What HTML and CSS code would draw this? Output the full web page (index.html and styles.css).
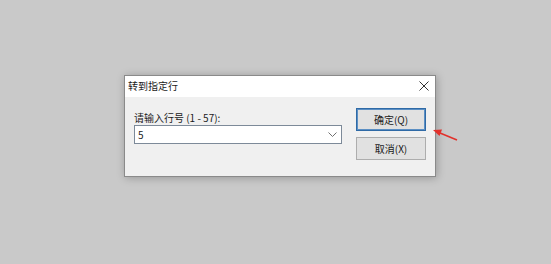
FILE: index.html
```html
<!DOCTYPE html>
<html lang="zh-CN">
<head>
<meta charset="utf-8">
<title>转到指定行</title>
<link rel="stylesheet" href="styles.css">
</head>
<body>
<div class="stage">
  <div class="dialog">
    <div class="titlebar">
      <span class="title">转到指定行</span>
      <svg class="close" width="10" height="10" viewBox="0 0 10 10"><path d="M0.5 0.5 L9.5 9.5 M9.5 0.5 L0.5 9.5" stroke="#333" stroke-width="1" fill="none"/></svg>
    </div>
    <div class="content">
      <div class="left">
        <div class="label">请输入行号 (1 - 57):</div>
        <div class="combo">
          <span class="value">5</span>
          <svg class="chev" width="9" height="5" viewBox="0 0 9 5"><path d="M0.5 0.5 L4.5 4.5 L8.5 0.5" stroke="#707070" stroke-width="1" fill="none"/></svg>
        </div>
      </div>
      <div class="buttons">
        <div class="btn primary">确定(Q)</div>
        <div class="btn">取消(X)</div>
      </div>
    </div>
  </div>
  <svg class="arrow" width="30" height="16" viewBox="0 0 30 16"><path d="M26 13 L9 6" stroke="#e2312b" stroke-width="1.6" fill="none"/><path d="M2 3 L11 2.5 L8.5 9 Z" fill="#e2312b"/></svg>
</div>
</body>
</html>
```
FILE: styles.css
```css
html, body {
  margin: 0;
  padding: 0;
  background: #c9c9c9;
  width: 551px;
  height: 264px;
  overflow: hidden;
}
.stage {
  position: relative;
  padding: 75px 0 0 124px;
}
.dialog {
  width: 310px;
  height: 100px;
  border: 1px solid #8a8a8a;
  background: #f0f0f0;
  box-shadow: 1px 1px 8px rgba(0,0,0,0.25);
  font-family: "Noto Sans CJK SC", "Noto Sans", sans-serif;
  font-size: 10px;
  color: #1a1a1a;
}
.titlebar {
  height: 21px;
  background: #ffffff;
  display: flex;
  align-items: center;
  justify-content: space-between;
  padding: 0 6px 2px 3px;
  box-sizing: border-box;
}
.title {
  font-size: 10px;
  line-height: 14px;
}
.content {
  display: flex;
  padding: 11px 9px 0 9px;
}
.left {
  display: flex;
  flex-direction: column;
  padding-top: 3px;
}
.label {
  line-height: 14px;
  height: 14px;
  margin-bottom: 0;
}
.combo {
  width: 199px;
  height: 17px;
  border: 1px solid #7d8a99;
  background: #fff;
  display: flex;
  align-items: center;
  justify-content: space-between;
  padding: 0 4px 0 3px;
  box-sizing: content-box;
}
.combo .value {
  line-height: 14px;
}
.buttons {
  display: flex;
  flex-direction: column;
  gap: 6px;
  margin-left: auto;
}
.btn {
  width: 68px;
  height: 21px;
  border: 1px solid #adadad;
  background: #e1e1e1;
  display: flex;
  align-items: center;
  justify-content: center;
  line-height: 14px;
}
.btn.primary {
  border: 1px solid #2f6aa6;
  box-shadow: inset 0 0 0 1px #5b8fc4;
}
.arrow {
  position: absolute;
  left: 431px;
  top: 127px;
}
```
